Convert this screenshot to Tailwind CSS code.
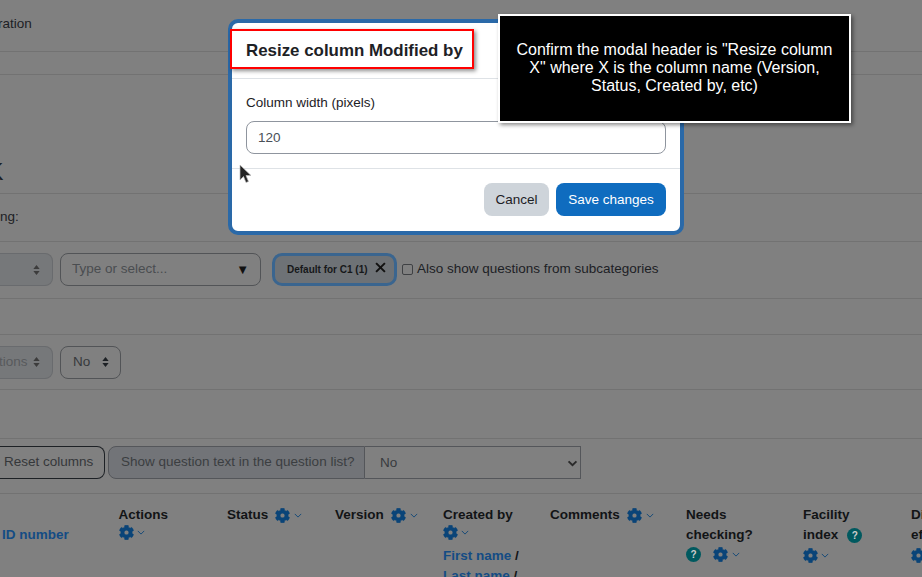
<!DOCTYPE html>
<html><head><meta charset="utf-8"><script src="https://cdn.jsdelivr.net/npm/@tailwindcss/browser@4"></script></head>
<body class="m-0">
<svg class="hidden"><defs>
<symbol id="cog" viewBox="0 0 512 512"><path fill="currentColor" stroke="currentColor" stroke-width="18" d="M487.4 315.7l-42.6-24.6c4.3-23.2 4.3-47 0-70.2l42.6-24.6c4.9-2.8 7.1-8.6 5.5-14-11.1-35.6-30-67.8-54.7-94.6-3.8-4.1-10-5.1-14.8-2.3L380.8 110c-17.9-15.4-38.5-27.3-60.8-35.1V25.8c0-5.6-3.9-10.5-9.4-11.7-36.7-8.2-74.3-7.8-109.2 0-5.5 1.2-9.4 6.1-9.4 11.7V75c-22.2 7.9-42.8 19.8-60.8 35.1L88.7 85.5c-4.9-2.8-11-1.9-14.8 2.3-24.7 26.7-43.6 58.9-54.7 94.6-1.7 5.4.6 11.2 5.5 14L67.3 221c-4.3 23.2-4.3 47 0 70.2l-42.6 24.6c-4.9 2.8-7.1 8.6-5.5 14 11.1 35.6 30 67.8 54.7 94.6 3.8 4.1 10 5.1 14.8 2.3l42.6-24.6c17.9 15.4 38.5 27.3 60.8 35.1v49.2c0 5.6 3.9 10.5 9.4 11.7 36.7 8.2 74.3 7.8 109.2 0 5.5-1.2 9.4-6.1 9.4-11.7v-49.2c22.2-7.9 42.8-19.8 60.8-35.1l42.6 24.6c4.9 2.8 11 1.9 14.8-2.3 24.7-26.7 43.6-58.9 54.7-94.6 1.5-5.5-.7-11.3-5.6-14.1zM256 336c-44.1 0-80-35.9-80-80s35.9-80 80-80 80 35.9 80 80-35.9 80-80 80z"/></symbol>
<symbol id="chev" viewBox="0 0 10 6"><path d="M1 1l4 4 4-4" fill="none" stroke="currentColor" stroke-width="1.1"/></symbol>
<symbol id="chevb" viewBox="0 0 12 8"><path d="M1.5 1.5L6 6l4.5-4.5" fill="none" stroke="currentColor" stroke-width="2.2"/></symbol>
<symbol id="updown" viewBox="0 0 10 14"><path fill="currentColor" d="M5 0l4.5 5.5H.5zM5 14l4.5-5.5H.5z"/></symbol>
<symbol id="x" viewBox="0 0 10 10"><path d="M1 1l8 8M9 1l-8 8" fill="none" stroke="currentColor" stroke-width="1.8"/></symbol>
</defs></svg>
<div class="relative w-[922px] h-[577px] overflow-hidden bg-[#808080] font-['Liberation_Sans',sans-serif] text-[13.5px] text-[#1d2125]">
  <!-- page under the backdrop -->
  <div class="flex flex-col">
    <div class="h-[52px] border-b border-[#727272] pt-[16px] leading-[16px] -ml-[2px]">ration</div>
    <div class="h-[23px] border-b border-[#727272]"></div>
    <div class="h-[119px] border-b border-[#727272] flex items-end pb-[9px] overflow-hidden"><span class="-ml-[12.5px] text-[24px] leading-[24px] text-[#1d2125]">K</span></div>
    <div class="h-[48px] border-b border-[#727272] pt-[15px] leading-[16px]">ng:</div>
    <div class="h-[57px] border-b border-[#727272] flex items-center gap-[7px] pb-[1px]">
      <div class="w-[53px] h-[33px] bg-[#76787a] border border-l-0 border-[#696b6e] rounded-r-[8px] flex items-center justify-end pr-[12px] text-[#3c3c3c]"><svg class="w-[7px] h-[10px]"><use href="#updown"/></svg></div>
      <div class="w-[201px] h-[33px] border border-[#525457] rounded-[8px] flex items-center justify-between pl-[11px] pr-[11px] text-[#4a4d50]"><span>Type or select...</span><span class="text-[#111] text-[13px]">▼</span></div>
      <div class="ml-[4px] h-[33px] w-[125px] rounded-[10px] border-[3px] border-[#3a658f] bg-[#6e7276] flex items-center pl-[12px] text-[10px] font-bold text-[#16181a]"><span>Default for C1 (1)</span><svg class="ml-[7px] -mt-[4px] w-[11px] h-[11px] text-[#111]"><use href="#x"/></svg></div>
      <div class="-ml-[2px] flex items-center gap-[4px]"><span class="w-[11px] h-[11px] rounded-[2px] border border-[#3f4144] inline-block"></span><span class="whitespace-nowrap">Also show questions from subcategories</span></div>
    </div>
    <div class="h-[36px] border-b border-[#727272]"></div>
    <div class="h-[55px] border-b border-[#727272] flex items-center gap-[7px]">
      <div class="w-[53px] h-[33px] bg-[#76787a] border border-l-0 border-[#696b6e] rounded-r-[8px] flex items-center justify-between pr-[12px] text-[#585a5d] overflow-hidden"><span class="-ml-[1px]">tions</span><svg class="w-[7px] h-[10px] text-[#3c3c3c]"><use href="#updown"/></svg></div>
      <div class="w-[61px] h-[33px] border border-[#525457] rounded-[8px] flex items-center justify-between pl-[12px] pr-[11px] text-[#37393c]"><span>No</span><svg class="w-[7px] h-[10px] text-[#1d2125]"><use href="#updown"/></svg></div>
    </div>
    <div class="h-[49px] border-b border-[#727272]"></div>
    <div class="h-[55px] border-b border-[#727272] flex items-start pt-[7px] gap-[3px]">
      <div class="w-[105px] h-[33px] border border-[#1d2125] border-l-0 rounded-r-[8px] flex items-center pl-[4px] text-[#35373a]">Reset columns</div>
      <div class="flex h-[33px] w-[473px]">
        <div class="w-[257px] shrink-0 bg-[#727478] border border-[#54565a] rounded-l-[8px] flex items-center pl-[12px] whitespace-nowrap text-[#3b3e41]">Show question text in the question list?</div>
        <div class="flex-1 border border-l-0 border-[#54565a] flex items-center justify-between pl-[15px] pr-[2px] pt-[1px] text-[#393b3e]"><span>No</span><svg class="w-[11px] h-[7px] text-[#2a2a2a]"><use href="#chevb"/></svg></div>
      </div>
    </div>
    <div class="flex items-start pt-[11px] font-bold leading-[20px] text-[#121416] whitespace-nowrap">
      <div class="w-[119px] shrink-0 pt-[20px] pl-[2px] text-[#144c84]">ID number</div>
      <div class="w-[108px] shrink-0 -ml-[0.5px] mr-[0.5px]"><div>Actions</div><div class="flex items-center gap-[3px] text-[#0a4478]"><svg class="w-[15px] h-[15px]"><use href="#cog"/></svg><svg class="w-[8px] h-[5px]"><use href="#chev"/></svg></div></div>
      <div class="w-[108px] shrink-0 flex items-center"><span>Status</span><svg class="w-[15px] h-[15px] ml-[7px] text-[#0a4478]"><use href="#cog"/></svg><svg class="w-[8px] h-[5px] ml-[4px] text-[#0a4478]"><use href="#chev"/></svg></div>
      <div class="w-[108px] shrink-0 flex items-center"><span>Version</span><svg class="w-[15px] h-[15px] ml-[7px] text-[#0a4478]"><use href="#cog"/></svg><svg class="w-[8px] h-[5px] ml-[4px] text-[#0a4478]"><use href="#chev"/></svg></div>
      <div class="w-[107px] shrink-0"><div>Created by</div><div class="flex items-center gap-[3px] text-[#0a4478]"><svg class="w-[15px] h-[15px]"><use href="#cog"/></svg><svg class="w-[8px] h-[5px]"><use href="#chev"/></svg></div><div class="pt-[6px] text-[#144c84]">First name <span class="text-[#121416]">/</span></div><div class="text-[#144c84]">Last name <span class="text-[#121416]">/</span></div></div>
      <div class="w-[136px] shrink-0 flex items-center"><span>Comments</span><svg class="w-[15px] h-[15px] ml-[7px] text-[#0a4478]"><use href="#cog"/></svg><svg class="w-[8px] h-[5px] ml-[4px] text-[#0a4478]"><use href="#chev"/></svg></div>
      <div class="w-[117px] shrink-0"><div>Needs</div><div>checking?</div><div class="flex items-center mt-[2px]"><span class="w-[15px] h-[15px] rounded-full bg-[#00595f] text-[10px] leading-[15px] text-center text-[#ccc]">?</span><svg class="w-[15px] h-[15px] ml-[12px] -mt-[1px] text-[#0a4478]"><use href="#cog"/></svg><svg class="w-[8px] h-[5px] ml-[4px] text-[#0a4478]"><use href="#chev"/></svg></div></div>
      <div class="w-[108px] shrink-0"><div>Facility</div><div class="flex items-center">index<span class="ml-[9px] w-[15px] h-[15px] rounded-full bg-[#00595f] text-[10px] leading-[15px] text-center text-[#ccc]">?</span></div><div class="flex items-center gap-[3px] mt-[3px] text-[#0a4478]"><svg class="w-[15px] h-[15px]"><use href="#cog"/></svg><svg class="w-[8px] h-[5px]"><use href="#chev"/></svg></div></div>
      <div class="shrink-0"><div>Discrimination</div><div>effectiveness</div><div class="flex items-center text-[#0a4478] mt-[3px]"><svg class="w-[15px] h-[15px]"><use href="#cog"/></svg></div></div>
    </div>
  </div>

  <!-- modal -->
  <div class="absolute left-[228px] top-[19px] w-[456px] h-[216px] bg-white border-[4px] border-[#2a69a8] rounded-[10px] flex flex-col text-[#1d2125]">
    <div class="h-[56px] border-b border-[#dee2e6] shrink-0 pl-[14px] flex items-center text-[16.9px] font-bold whitespace-nowrap">Resize column Modified by</div>
    <div class="h-[90px] border-b border-[#dee2e6] shrink-0 px-[14px] pt-[16px]">
      <div class="leading-[16px]">Column width (pixels)</div>
      <div class="mt-[10px] h-[33px] border border-[#8f959e] rounded-[8px] pl-[11px] pt-[1px] flex items-center text-[#495057]">120</div>
    </div>
    <div class="flex-1 flex items-start justify-end gap-[7px] pr-[14px] pt-[14px]">
      <div class="w-[65px] h-[33px] rounded-[8px] bg-[#ced4da] flex items-center justify-center pt-[1px]">Cancel</div>
      <div class="w-[110px] h-[33px] rounded-[8px] bg-[#0f6cbf] flex items-center justify-center pt-[1px] text-white">Save changes</div>
    </div>
  </div>
  <!-- red highlight -->
  <div class="absolute left-[230px] top-[29px] w-[244px] h-[40px] border-[2px] border-[#f00] shadow-[2px_2px_4px_rgba(0,0,0,0.45)]"></div>
  <!-- tooltip -->
  <div class="absolute left-[498px] top-[14px] w-[353px] h-[109px] bg-black border-[2px] border-white shadow-[2px_2px_4px_rgba(0,0,0,0.45)] flex items-center justify-center px-[16px] pb-[1px] text-center text-[16px] leading-[18px] text-white">Confirm the modal header is "Resize column X" where X is the column name (Version, Status, Created by, etc)</div>
  <!-- pointer -->
  <svg class="absolute left-[239px] top-[164px] w-[13px] h-[20px]" viewBox="0 0 13 20"><path d="M1 1v15l3.5-3.5 2.5 6 2.5-1-2.5-6h5z" fill="#222" stroke="#bbb" stroke-width="0.7"/></svg>
</div>
</body></html>
